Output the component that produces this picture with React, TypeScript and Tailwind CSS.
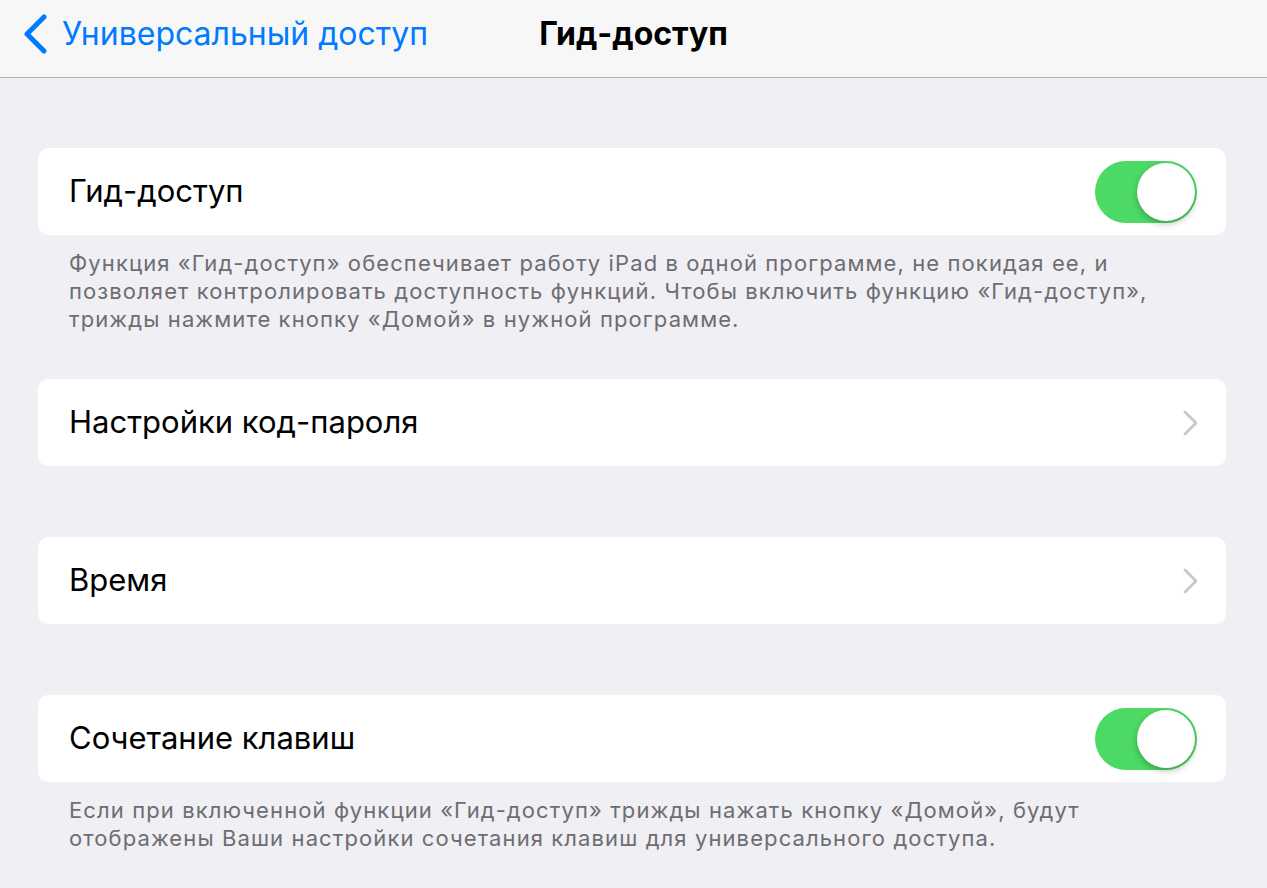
import React from "react";

const Toggle = () => (
  <div className="relative h-[62px] w-[102px] rounded-full bg-[#4cd964]">
    <div className="absolute right-[2px] top-[2px] h-[58px] w-[58px] rounded-full bg-white shadow-[0_3px_6px_rgba(0,0,0,0.25)]" />
  </div>
);

const Chevron = () => (
  <svg width="16" height="26" viewBox="0 0 16 26">
    <path d="M4 2 L15 13 L4 24" fill="none" stroke="#c7c7cc" strokeWidth="2.8" strokeLinecap="round" strokeLinejoin="round" />
  </svg>
);

const Row = ({ label, right }: { label: string; right: React.ReactNode }) => (
  <div className="flex h-[87px] items-center justify-between rounded-[10px] bg-white pl-[31px] pr-[29px]">
    <span className="text-[31px] text-black">{label}</span>
    {right}
  </div>
);

const Footer = ({ children }: { children: React.ReactNode }) => (
  <p className="pl-[31px] pr-[20px] pt-[14px] text-[22px] leading-[28px] tracking-[1.1px] text-[#6d6d72]">{children}</p>
);

export default function App() {
  return (
    <div className="h-[888px] w-[1267px] overflow-hidden bg-[#efeff4]" style={{ fontFamily: "Inter, Roboto, sans-serif" }}>
      <div className="relative flex h-[78px] items-center border-b border-[#b2b2b2] bg-[#f7f7f7] pb-[9px]">
        <div className="flex items-center pl-[22px] text-[#007aff]">
          <svg width="26" height="40" viewBox="0 0 26 40">
            <path d="M22 3 L5 20 L22 37" fill="none" stroke="#007aff" strokeWidth="5" strokeLinecap="round" strokeLinejoin="round" />
          </svg>
          <span className="ml-[14px] text-[32px]">Универсальный доступ</span>
        </div>
        <div className="absolute left-0 right-0 text-center text-[32px] font-bold text-black">Гид-доступ</div>
      </div>
      <div className="pl-[38px] pr-[41px] pt-[70px]">
        <Row label="Гид-доступ" right={<Toggle />} />
        <Footer>
          Функция «Гид-доступ» обеспечивает работу iPad в одной программе, не покидая ее, и позволяет контролировать доступность функций. Чтобы включить функцию «Гид-доступ», трижды нажмите кнопку «Домой» в нужной программе.
        </Footer>
        <div className="mt-[46px]">
          <Row label="Настройки код-пароля" right={<Chevron />} />
        </div>
        <div className="mt-[71px]">
          <Row label="Время" right={<Chevron />} />
        </div>
        <div className="mt-[71px]">
          <Row label="Сочетание клавиш" right={<Toggle />} />
        </div>
        <Footer>
          Если при включенной функции «Гид-доступ» трижды нажать кнопку «Домой», будут отображены Ваши настройки сочетания клавиш для универсального доступа.
        </Footer>
      </div>
    </div>
  );
}
